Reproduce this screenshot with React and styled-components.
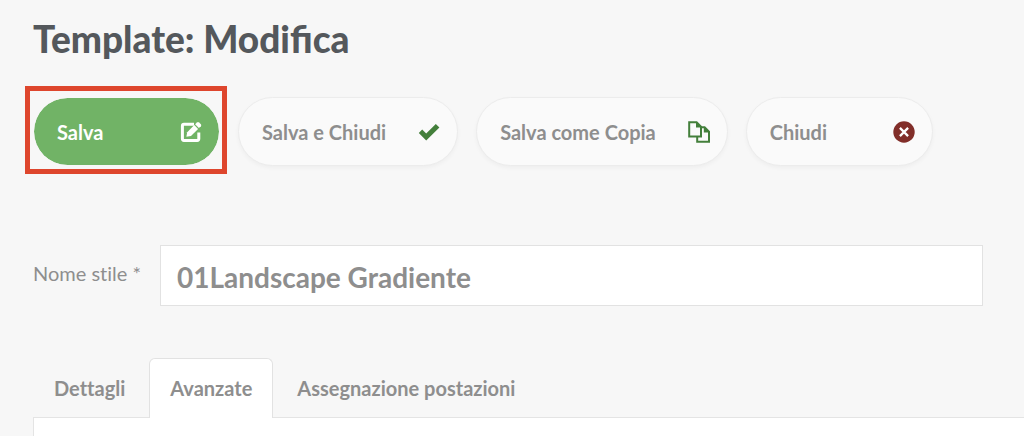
import React, { useState } from "react";
import styled, { createGlobalStyle, css } from "styled-components";

const GlobalStyle = createGlobalStyle`
  *, *::before, *::after { box-sizing: border-box; }
  body {
    margin: 0;
    background: #f7f7f7;
    color: #8e8e8e;
    font-family: Lato, "Open Sans", sans-serif;
    font-size: 20px;
  }
  button, input { font: inherit; color: inherit; }
`;

const Page = styled.main`
  padding: 15px 0 0 33px;
  overflow-x: hidden;
`;

const Title = styled.h1`
  margin: 0;
  color: #54585c;
  font-size: 37px;
  line-height: 48px;
  font-weight: 900;
`;

const Toolbar = styled.div`
  display: flex;
  flex-wrap: wrap;
  gap: 18px;
  margin-top: 34px;
`;

const Highlight = styled.div`
  position: relative;

  &::after {
    content: "";
    position: absolute;
    inset: -11px -7px -8px -8px;
    border: 5px solid #de462d;
    pointer-events: none;
  }
`;

const ActionButton = styled.button`
  display: flex;
  align-items: center;
  justify-content: space-between;
  gap: 32px;
  min-width: 187px;
  height: 69px;
  padding: 0 17px 0 23px;
  border: 1px solid #ececec;
  border-radius: 35px;
  background: #fafafa;
  box-shadow: 0 2px 4px rgba(0, 0, 0, 0.04);
  font-weight: 700;
  white-space: nowrap;
  cursor: pointer;

  ${({ $primary }) =>
    $primary &&
    css`
      border-color: #f7f7f7;
      background: #71b366;
      background-clip: padding-box;
      color: #fff;
      box-shadow: none;
    `}
`;

const Icon = styled.svg`
  flex: none;
  width: 22px;
  height: 22px;
`;

const Field = styled.div`
  display: flex;
  align-items: center;
  gap: 19px;
  margin: 79px 41px 0 0;
`;

const FieldLabel = styled.label`
  flex: none;
  padding-bottom: 6px;
  font-variant-ligatures: none;
`;

const TextInput = styled.input`
  flex: 1;
  min-width: 0;
  height: 61px;
  padding: 2px 16px 0;
  border: 1px solid #e2e2e2;
  border-radius: 0;
  background: #fff;
  font-size: 28px;
  font-weight: 700;
  outline: none;
`;

const TabList = styled.div`
  display: flex;
  gap: 3px;
  margin-top: 52px;
`;

const Tab = styled.button`
  height: 60px;
  margin-bottom: -1px;
  padding: 0 20px 2px;
  border: 1px solid transparent;
  border-bottom: 0;
  border-radius: 6px 6px 0 0;
  background: transparent;
  font-weight: 700;
  font-variant-ligatures: none;
  white-space: nowrap;
  cursor: pointer;

  &[aria-selected="true"] {
    position: relative;
    border-color: #e2e2e2;
    background: #fff;
  }
`;

const Panel = styled.div`
  min-height: 160px;
  border: 1px solid #e4e4e4;
  border-right: 0;
  background: #fff;
`;

const Viewport = styled.div`
  height: 100vh;
  overflow: hidden;
`;

const EditIcon = () => (
  <Icon viewBox="0 0 22 22" aria-hidden="true">
    <path d="M14 3.3H4Q2.4 3.3 2.4 4.9V17.8Q2.4 19.4 4 19.4H17.2Q18.8 19.4 18.8 17.8V11.5" fill="none" stroke="#fff" strokeWidth="3" />
    <path d="M6.4 15.8 7.2 11.2 14.3 4.1 18.1 7.9 11 15 Z" fill="#fff" />
    <path d="M15.1 3.3 17 1.4Q18 .6 19 1.4L20.9 3.3Q21.6 4.3 20.9 5.2L18.9 7.1Z" fill="#fff" />
  </Icon>
);

const CheckIcon = () => (
  <Icon viewBox="0 0 22 22" aria-hidden="true">
    <path d="M.8 11.9 4.2 8.5 8.2 12.4 17.8 3 21.4 6.5 8.2 19.4Z" fill="#437f3b" />
  </Icon>
);

const CopyIcon = () => (
  <Icon viewBox="0 0 22 22" aria-hidden="true">
    <path d="M1.2 1.2H8.6L13 5.6V15.4H1.2Z" fill="none" stroke="#437f3b" strokeWidth="2" />
    <path d="M8 1V6.6H13.6Z" fill="#437f3b" />
    <path d="M13 6.2H16.6L21 10.6V20.8H9.2V15.4" fill="none" stroke="#437f3b" strokeWidth="2" />
    <path d="M15.8 6V11.6H21.6Z" fill="#437f3b" />
  </Icon>
);

const CloseIcon = () => (
  <Icon viewBox="0 0 22 22" aria-hidden="true">
    <circle cx="11" cy="11" r="10.7" fill="#812e29" />
    <path d="M6.9 6.9 15.1 15.1M15.1 6.9 6.9 15.1" stroke="#fff" strokeWidth="2.3" />
  </Icon>
);

const TABS = ["Dettagli", "Avanzate", "Assegnazione postazioni"];

export default function App() {
  const [name, setName] = useState("01Landscape Gradiente");
  const [active, setActive] = useState("Avanzate");

  return (
    <Viewport>
      <GlobalStyle />
      <Page>
        <Title>Template: Modifica</Title>
        <Toolbar>
          <Highlight>
            <ActionButton type="button" $primary>
              Salva
              <EditIcon />
            </ActionButton>
          </Highlight>
          <ActionButton type="button">
            Salva e Chiudi
            <CheckIcon />
          </ActionButton>
          <ActionButton type="button">
            Salva come Copia
            <CopyIcon />
          </ActionButton>
          <ActionButton type="button">
            Chiudi
            <CloseIcon />
          </ActionButton>
        </Toolbar>
        <Field>
          <FieldLabel htmlFor="style-name">Nome stile *</FieldLabel>
          <TextInput
            id="style-name"
            required
            value={name}
            onChange={(event) => setName(event.target.value)}
          />
        </Field>
        <TabList role="tablist">
          {TABS.map((label) => (
            <Tab
              key={label}
              type="button"
              role="tab"
              aria-selected={label === active}
              onClick={() => setActive(label)}
            >
              {label}
            </Tab>
          ))}
        </TabList>
        <Panel role="tabpanel" aria-label={active} />
      </Page>
    </Viewport>
  );
}
